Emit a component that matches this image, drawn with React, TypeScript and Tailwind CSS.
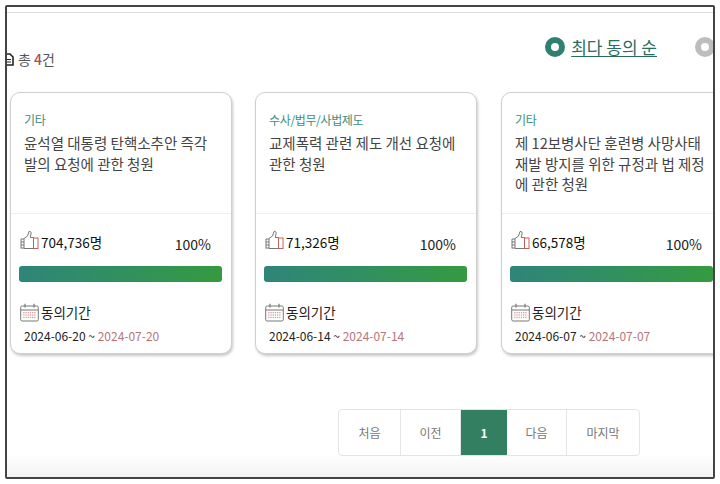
const font = '[font-family:"Noto_Sans_CJK_KR","Noto_Sans",sans-serif]';

function ThumbIcon() {
  return (
    <svg width="19" height="20" viewBox="0 0 19 20" fill="none" className="shrink-0">
      <path d="M4 8.5 L7.5 6 L9 1.5 C10.5 1 11.5 2.2 11 4 L10.2 7.5 L13.5 7.5 L13.5 18.5 L4 18.5 Z" stroke="#777" strokeWidth="1" strokeLinejoin="round" />
      <path d="M1 9 H4 M1 12 H4 M1 15 H4 M1 18 H4 M1 9 V18.5" stroke="#777" strokeWidth="1" />
      <rect x="13.5" y="8" width="4.5" height="10.5" stroke="#c4605a" strokeWidth="1" />
    </svg>
  );
}

function CalendarIcon() {
  const dots = [];
  for (let r = 0; r < 3; r++) {
    for (let c = 0; c < 6; c++) {
      dots.push(<rect key={`${r}-${c}`} x={3.2 + c * 2.2} y={9 + r * 2.4} width="1.3" height="1.3" fill="#d8a0a0" />);
    }
  }
  return (
    <svg width="19" height="19" viewBox="0 0 19 19" fill="none" className="shrink-0">
      <rect x="0.7" y="3" width="17.6" height="15" rx="1.5" stroke="#777" strokeWidth="1" />
      <path d="M1 7 H18" stroke="#777" strokeWidth="1" />
      <path d="M5 0.8 V4.5 M14 0.8 V4.5" stroke="#777" strokeWidth="1.2" />
      {dots}
    </svg>
  );
}

function Card({ cat, title, count, start, end, extra = "" }: { cat: string; title: string; count: string; start: string; end: string; extra?: string }) {
  return (
    <div className={`w-[222px] h-[262px] shrink-0 rounded-[10px] border border-[#cfcfcf] bg-white shadow-[1px_2px_3px_rgba(0,0,0,0.22)] flex flex-col ${extra}`}>
      <div className="h-[121px] pl-[13px] pr-[12px] pt-[19px] border-b border-[#eeeeee]">
        <div className="text-[12px] leading-[16px] text-[#3c8f7c] tracking-[-0.35px]">{cat}</div>
        <div className="mt-[5px] text-[14.5px] leading-[20.5px] text-[#444444]">{title}</div>
      </div>
      <div className="flex items-start h-[42px] pl-[9px] pr-[20px] pt-[16px]">
        <ThumbIcon />
        <span className="ml-[2px] mt-[2px] text-[13.5px] leading-[20px] text-[#111111]">{count}</span>
        <span className="ml-auto mt-[4px] text-[14px] leading-[20px] text-[#222222]">100%</span>
      </div>
      <div className="mt-[10px] ml-[8px] mr-[9px] h-[16px] rounded-[3px] bg-gradient-to-r from-[#2f8578] to-[#359a3f]" />
      <div className="flex items-center mt-[20px] pl-[9px] h-[20px]">
        <CalendarIcon />
        <span className="ml-[2px] text-[13.5px] leading-[20px] text-[#222222]">동의기간</span>
      </div>
      <div className="mt-[5px] pl-[13px] text-[12px] leading-[18px] text-[#222222]">
        {start} ~ <span className="text-[#b5757a]">{end}</span>
      </div>
    </div>
  );
}

function PageBtn({ w, label, active, last }: { w: string; label: string; active?: boolean; last?: boolean }) {
  return (
    <div
      className={`${w} flex items-center justify-center text-[12px] ${active ? "bg-[#327f62] text-white font-bold" : "text-[#777777]"} ${last || active ? "" : "border-r border-[#e6e6e6]"}`}
    >
      {label}
    </div>
  );
}

export default function App() {
  return (
    <div className={`w-[720px] h-[484px] bg-white pl-[5px] pt-[5px] ${font}`}>
      <div className="w-[710px] h-[474px] border-2 border-[#444444] rounded-[2px] overflow-hidden flex flex-col bg-gradient-to-b from-white from-[95%] to-[#f2f2f2]">
        <div className="h-[6px] shrink-0 border-b border-[#dddddd]" />
        <div className="h-[79px] shrink-0 flex">
          <div className="flex items-center h-[21px] mt-[36px] -ml-[3px]">
            <svg width="10" height="13" viewBox="0 0 10 13" fill="none" className="shrink-0">
              <path d="M1 1 H6 L9 4 V12 H1 Z" stroke="#222" strokeWidth="1.6" />
              <path d="M3 6.5 H7 M3 9 H7" stroke="#222" strokeWidth="1.2" />
            </svg>
            <span className="ml-[4px] text-[14px] text-[#555555]">
              총 <span className="text-[#a85050] font-medium">4</span>건
            </span>
          </div>
          <div className="ml-auto flex items-center h-[22px] mt-[23px] -mr-[2px]">
            <span className="w-[20px] h-[20px] rounded-full border-[6px] border-[#2f8071] bg-white" />
            <span className="ml-[6px] text-[17px] leading-[22px] text-[#2a6d5f] underline underline-offset-2">최다 동의 순</span>
            <span className="ml-[38px] w-[20px] h-[20px] rounded-full border-[6px] border-[#bdbdbd] bg-white" />
          </div>
        </div>
        <div className="flex gap-[23px] pl-[3px] shrink-0">
          <Card cat="기타" title="윤석열 대통령 탄핵소추안 즉각 발의 요청에 관한 청원" count="704,736명" start="2024-06-20" end="2024-07-20" />
          <Card cat="수사/법무/사법제도" title="교제폭력 관련 제도 개선 요청에 관한 청원" count="71,326명" start="2024-06-14" end="2024-07-14" />
          <Card extra="ml-[1px]" cat="기타" title="제 12보병사단 훈련병 사망사태 재발 방지를 위한 규정과 법 제정에 관한 청원" count="66,578명" start="2024-06-07" end="2024-07-07" />
        </div>
        <div className="mt-[55px] ml-[331px] w-[302px] h-[47px] shrink-0 flex rounded-[4px] border border-[#e4e4e4] bg-white overflow-hidden">
          <PageBtn w="w-[62px]" label="처음" />
          <PageBtn w="w-[60px]" label="이전" />
          <PageBtn w="w-[46px]" label="1" active />
          <PageBtn w="w-[60px]" label="다음" />
          <PageBtn w="w-[72px]" label="마지막" last />
        </div>
      </div>
    </div>
  );
}
